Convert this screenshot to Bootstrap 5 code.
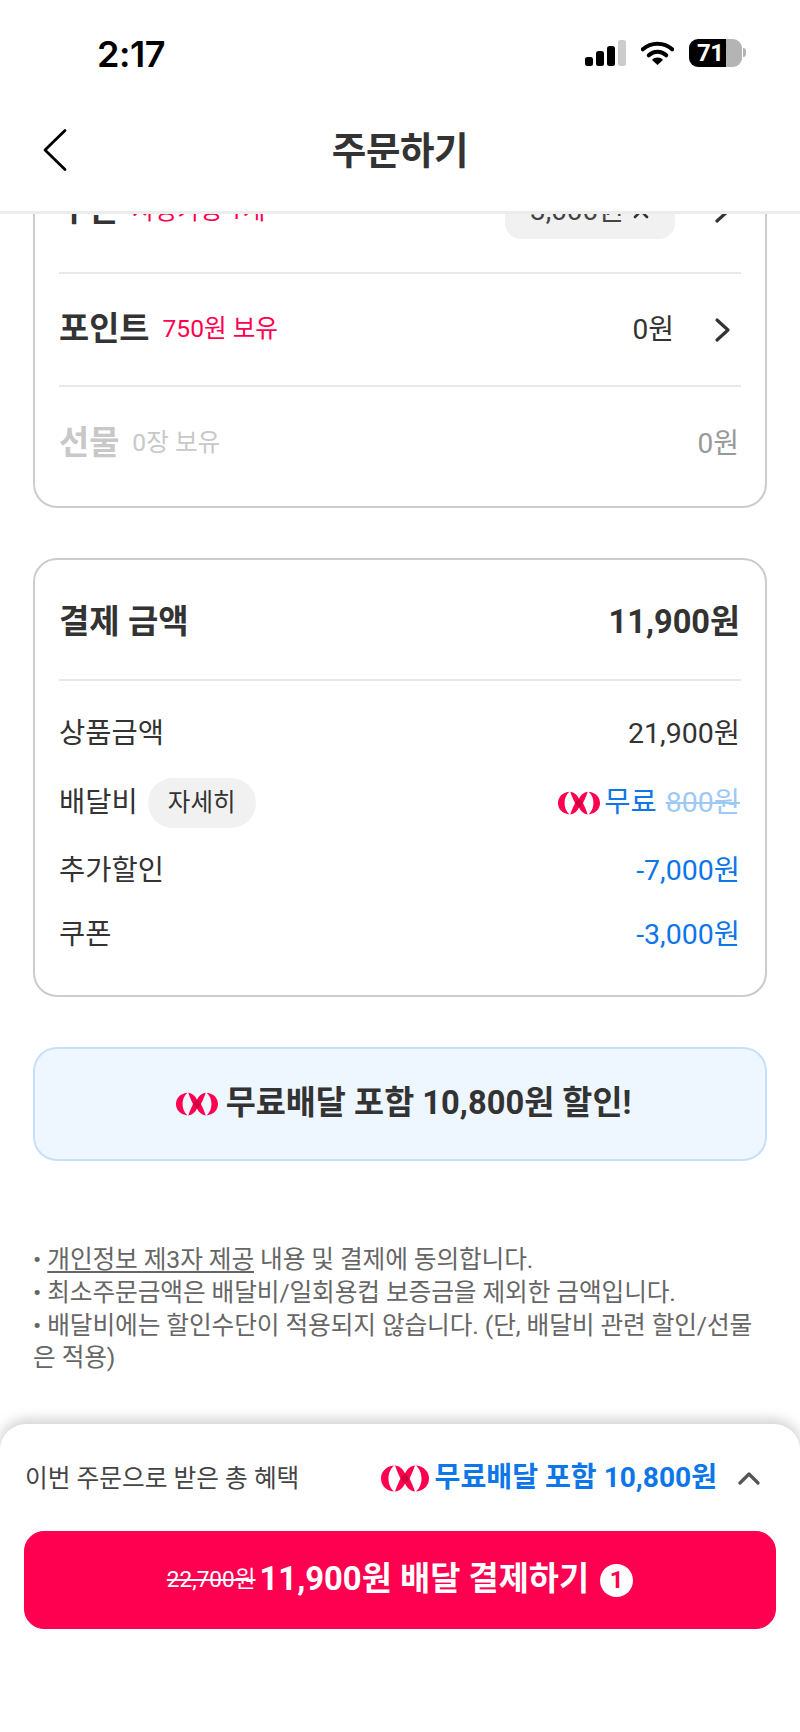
<!DOCTYPE html>
<html lang="ko">
<head>
<meta charset="utf-8">
<title>주문하기</title>
<link href="https://cdn.jsdelivr.net/npm/bootstrap@5.3.0/dist/css/bootstrap.min.css" rel="stylesheet">
<style>
:root{--ink:#333;--pinkish:#ff0050;--bluish:#0d76e8;}
html,body{margin:0;background:#fff;}
body{font-family:Roboto,"Noto Sans CJK KR",sans-serif;color:var(--ink);}
.shell{width:800px;height:1732px;overflow:hidden;}
.top-area{height:214px;background:#fff;border-bottom:3px solid #ececec;flex:none;position:relative;z-index:2;}
.status-row{height:105px;padding:33px 58px 0 97px;}
.status-icons{column-gap:15px;padding-top:6px;}
.clock{font-family:Inter,sans-serif;font-weight:600;font-size:36px;line-height:42px;color:#000;letter-spacing:-.5px;}
.batt{width:53px;height:28px;border-radius:9px;background:linear-gradient(90deg,#000 70%,#b4b4b4 70%);color:#fff;font:700 24px/28px Roboto,sans-serif;padding-left:8px;position:relative;letter-spacing:-.5px;}
.batt::after{content:"";position:absolute;left:54px;top:9px;width:3px;height:9px;border-radius:0 4px 4px 0;background:#b4b4b4;}
.title-row{height:93px;position:relative;}
.page-title{font-size:37.5px;font-weight:700;margin:0;line-height:1;letter-spacing:-.4px;}
.back-btn{position:absolute;left:42px;top:23px;line-height:0;}
.scroller{flex:1 1 auto;min-height:0;overflow:hidden;padding:0 33px;}
.panel{border:2px solid #ccc;border-radius:24px;background:#fff;}
.panel-a{margin-top:-66px;padding:0 24px;height:360px;}
.opt-row{height:113px;border-bottom:2px solid #e8e8e8;}
.opt-row:first-child{height:124px;}
.opt-row:last-child{border-bottom:0;}
.opt-name{font-size:32.8px;font-weight:700;margin-right:13px;}
.opt-note{font-size:24.6px;color:var(--pinkish);}
.opt-val{font-size:28px;margin-right:40px;}
.opt-arrow{margin-right:10px;}
.chip{background:#f1f1f1;border-radius:16px;width:170px;height:56px;font-size:28px;margin-right:39px;color:#444;}
.is-off{color:#c8c8c8;}
.is-off .opt-note{color:#c8c8c8;}
.is-off .opt-val{margin-right:2px;color:#999;}
.panel-b{margin-top:50px;padding:0 24px;height:439px;}
.sum-head{height:121px;padding-top:5px;border-bottom:2px solid #e8e8e8;}
.sum-title{font-size:33px;font-weight:700;}
.sum-total{font-size:32.6px;font-weight:700;margin-right:1px;}
.sum-list{padding:20px 1px 0 0;}
.sum-row{height:67px;font-size:28.5px;}
.sum-row:nth-child(2){height:70px;}
.sum-row:nth-child(3){height:66px;}
.sum-row:nth-child(4){height:62px;}
.pill-more{background:#f1f1f1;border-radius:25px;width:108px;height:50px;font-size:24.5px;margin-left:10px;}
.t-blue{color:var(--bluish);}
.t-faint{color:#9ec9f6;text-decoration:line-through;margin-left:9px;}
.promo{margin-top:50px;height:114px;padding-left:7px;background:#eef6ff;border:2px solid #c6e0fb;border-radius:24px;font-size:32.7px;font-weight:700;gap:8px;}
.notes{margin-top:83px;font-size:24.7px;line-height:32.8px;color:#666;letter-spacing:-.1px;}
.notes u{text-underline-offset:3px;}
.sheet{height:308px;flex:none;background:#fff;border-radius:26px 26px 0 0;box-shadow:0 -4px 14px rgba(0,0,0,.2);padding:0 24px;position:relative;z-index:2;}
.ben-row{height:107px;padding:2px 16px 0 0;}
.ben-label{font-size:24.7px;color:#444;padding-left:1px;}
.ben-val{font-size:28.1px;font-weight:700;color:var(--bluish);gap:6px;}
.ben-arrow{margin-left:21px;}
.pay-btn{height:98px;width:100%;border-radius:20px;background:var(--pinkish);border-color:var(--pinkish);color:#fff;font-weight:700;font-size:32.8px;gap:4px;}
.pay-btn:hover{background:var(--pinkish);color:#fff;}
.pay-old{font-size:22.6px;font-weight:400;text-decoration:line-through;}
.pay-count{width:33px;height:33px;border-radius:50%;background:#fff;color:var(--pinkish);font-size:24px;margin-left:7px;}
</style>
</head>
<body>
<div class="shell d-flex flex-column">
  <header class="top-area">
    <div class="status-row d-flex justify-content-between align-items-start">
      <div class="clock">2:17</div>
      <div class="status-icons d-flex align-items-center">
        <svg width="41" height="26" viewBox="0 0 41 26"><rect x="0" y="17" width="8" height="9" rx="2.5" fill="#000"/><rect x="11" y="11" width="8" height="15" rx="2.5" fill="#000"/><rect x="22" y="6" width="8" height="20" rx="2.5" fill="#000"/><rect x="33" y="0" width="8" height="26" rx="2.5" fill="#ccc"/></svg>
        <svg width="33" height="26" viewBox="0 0 36 26"><path d="M2 9C11 1 25 1 34 9" fill="none" stroke="#000" stroke-width="4.4" stroke-linecap="round"/><path d="M8.5 15.5C14 10.500 22 10.500 27.500 15.500" fill="none" stroke="#000" stroke-width="4.400" stroke-linecap="round"/><path d="M12 20.500C15 17 21 17 24 20.500L18 26Z" fill="#000"/></svg>
        <div class="batt">71</div>
      </div>
    </div>
    <div class="title-row d-flex justify-content-center align-items-center">
      <a class="back-btn" href="#" aria-label="뒤로"><svg width="26" height="44" viewBox="0 0 26 44"><path d="M23 2.500L3 22l20 19.500" fill="none" stroke="#000" stroke-width="2.800" stroke-linecap="round" stroke-linejoin="round"/></svg></a>
      <h1 class="page-title">주문하기</h1>
    </div>
  </header>

  <main class="scroller">
    <section class="panel panel-a">
      <div class="opt-row d-flex align-items-center">
        <span class="opt-name">쿠폰</span><span class="opt-note">사용가능 1개</span>
        <div class="chip d-flex align-items-center justify-content-center gap-2 ms-auto">3,000원 <svg width="18" height="18" viewBox="0 0 18 18"><path d="M3 3l12 12M15 3L3 15" stroke="#333" stroke-width="2.600" stroke-linecap="round"/></svg></div>
        <svg class="opt-arrow" width="17" height="26" viewBox="0 0 17 26"><path d="M3 3l11 10L3 23" fill="none" stroke="#333" stroke-width="3.200" stroke-linecap="round" stroke-linejoin="round"/></svg>
      </div>
      <div class="opt-row d-flex align-items-center">
        <span class="opt-name">포인트</span><span class="opt-note">750원 보유</span>
        <span class="opt-val ms-auto">0원</span>
        <svg class="opt-arrow" width="17" height="26" viewBox="0 0 17 26"><path d="M3 3l11 10L3 23" fill="none" stroke="#333" stroke-width="3.200" stroke-linecap="round" stroke-linejoin="round"/></svg>
      </div>
      <div class="opt-row is-off d-flex align-items-center">
        <span class="opt-name">선물</span><span class="opt-note">0장 보유</span>
        <span class="opt-val ms-auto">0원</span>
      </div>
    </section>

    <section class="panel panel-b">
      <div class="sum-head d-flex justify-content-between align-items-center">
        <span class="sum-title">결제 금액</span><span class="sum-total">11,900원</span>
      </div>
      <div class="sum-list">
        <div class="sum-row d-flex justify-content-between align-items-center"><span>상품금액</span><span>21,900원</span></div>
        <div class="sum-row d-flex justify-content-between align-items-center">
          <span class="d-flex align-items-center">배달비<span class="pill-more d-inline-flex align-items-center justify-content-center">자세히</span></span>
          <span class="d-flex align-items-center t-blue">
            <svg class="me-1" width="42" height="24" viewBox="0 0 48 27"><use href="#wow"/></svg>무료<span class="t-faint">800원</span>
          </span>
        </div>
        <div class="sum-row d-flex justify-content-between align-items-center"><span>추가할인</span><span class="t-blue">-7,000원</span></div>
        <div class="sum-row d-flex justify-content-between align-items-center"><span>쿠폰</span><span class="t-blue">-3,000원</span></div>
      </div>
    </section>

    <section class="promo d-flex align-items-center justify-content-center">
      <svg width="42" height="24" viewBox="0 0 48 27"><use href="#wow"/></svg>
      <span>무료배달 포함 10,800원 할인!</span>
    </section>

    <div class="notes">
      • <u>개인정보 제3자 제공</u> 내용 및 결제에 동의합니다.<br>
      • 최소주문금액은 배달비/일회용컵 보증금을 제외한 금액입니다.<br>
      • 배달비에는 할인수단이 적용되지 않습니다. (단, 배달비 관련 할인/선물은 적용)
    </div>
  </main>

  <footer class="sheet">
    <div class="ben-row d-flex justify-content-between align-items-center">
      <span class="ben-label">이번 주문으로 받은 총 혜택</span>
      <span class="d-flex align-items-center">
        <span class="ben-val d-flex align-items-center"><svg width="48" height="27" viewBox="0 0 48 27"><use href="#wow"/></svg>무료배달 포함 10,800원</span>
        <svg class="ben-arrow" width="22" height="14" viewBox="0 0 22 14"><path d="M2 12l9-9 9 9" fill="none" stroke="#555" stroke-width="3.200" stroke-linecap="round" stroke-linejoin="round"/></svg>
      </span>
    </div>
    <button type="button" class="btn pay-btn d-flex align-items-center justify-content-center">
      <span class="pay-old">22,700원</span><span>11,900원 배달 결제하기</span><span class="pay-count d-inline-flex align-items-center justify-content-center">1</span>
    </button>
  </footer>
</div>

<svg width="0" height="0" class="d-block" aria-hidden="true">
  <defs>
    <g id="wow">
      <path fill="#ff0050" d="M13 .5C4 1.500 0 7.500 0 13.500C0 19.500 4 25.500 13 26.500C9 23 7.500 18 7.500 13.500C7.500 9 9 4 13 .5Z"/>
      <path fill="#ff0050" d="M35 .5C44 1.500 48 7.500 48 13.500C48 19.500 44 25.500 35 26.500C39 23 40.500 18 40.500 13.500C40.500 9 39 4 35 .5Z"/>
      <path fill="#ff0050" d="M14 .5C18.500 1 22 4 24 8.500C26 4 29.500 1 34 .5C32.500 5 30.500 9.500 28.500 13.500C30.500 17.500 32.500 22 34 26.500C29.500 26 26 23 24 18.500C22 23 18.500 26 14 26.500C15.500 22 17.500 17.500 19.500 13.500C17.500 9.500 15.500 5 14 .5Z"/>
      <path fill="#d0003c" d="M24 8.500C25.800 10 27.300 11.700 28.500 13.500C27.300 15.300 25.800 17 24 18.500C22.200 17 20.700 15.300 19.500 13.500C20.700 11.700 22.200 10 24 8.500Z"/>
    </g>
  </defs>
</svg>
<script src="https://cdn.jsdelivr.net/npm/bootstrap@5.3.0/dist/js/bootstrap.bundle.min.js"></script>
</body>
</html>
